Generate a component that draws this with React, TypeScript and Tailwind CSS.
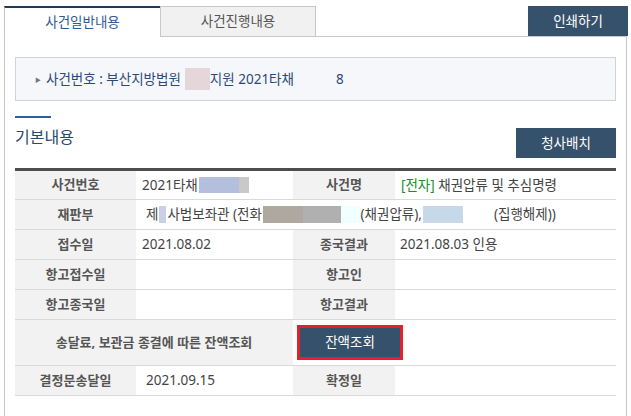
import React from 'react';

const font = { fontFamily: '"Noto Sans", "Noto Sans CJK KR", sans-serif' };

function Label({ children, colSpan }: { children?: React.ReactNode; colSpan?: number }) {
    return (
        <td colSpan={colSpan} className="bg-[#f2f2f2] text-center font-bold text-[#555] text-[13px] h-[30px] p-0">
            {children}
        </td>
    );
}

function Value({ children, colSpan, className = '' }: { children?: React.ReactNode; colSpan?: number; className?: string }) {
    return (
        <td colSpan={colSpan} className={`bg-white text-[#444] text-[13.5px] h-[30px] py-0 pr-0 pl-[6px] whitespace-nowrap ${className}`}>
            {children}
        </td>
    );
}

export default function App() {
    return (
        <div className="w-[631px] h-[416px] bg-white overflow-hidden pt-[6px] pl-[4px]" style={font}>
            <div className="w-[623px]">
                {/* tabs */}
                <div className="flex h-[31px]">
                    <div className="w-[156px] border-t-2 border-l border-t-[#1e3d5c] border-l-[#c4c4c4] flex items-center justify-center text-[13.5px] text-[#2f5d92]">
                        사건일반내용
                    </div>
                    <div className="w-[156px] bg-[#f1f1f1] border border-[#c8c8c8] flex items-center justify-center text-[13.5px] text-[#555]">
                        사건진행내용
                    </div>
                    <div className="flex-1 border-b border-[#c8c8c8] flex justify-end">
                        <button className="w-[100px] h-[30px] bg-[#36516b] text-white text-[13.5px] -mr-[1px]">인쇄하기</button>
                    </div>
                </div>

                <div className="border-l border-r border-[#c8c8c8] px-[10px] pt-[20px] h-[380px]">
                    {/* case number */}
                    <div className="h-[44px] bg-[#f6f7fb] border border-[#cfd3dc] flex items-center pl-[19px] text-[13.5px] text-[#2c4a78]">
                        <span className="text-[6px] text-[#777] mr-[5px] mt-[3px]">▶</span>
                        <span>사건번호 : 부산지방법원</span>
                        <span className="inline-block w-[25px] h-[22px] bg-[#e4d6d9] ml-[4px]"></span>
                        <span>지원 2021타채</span>
                        <span className="ml-[42px]">8</span>
                    </div>

                    {/* heading */}
                    <div className="flex justify-between mt-[15px]">
                        <div>
                            <div className="w-[36px] h-[2px] bg-[#2462a4]"></div>
                            <div className="text-[16px] leading-[20px] text-[#2b4a6b] mt-[9px]">기본내용</div>
                        </div>
                        <button className="w-[100px] h-[30px] bg-[#36516b] text-white text-[13.5px] mt-[12px]">청사배치</button>
                    </div>

                    {/* table */}
                    <table className="w-[601px] mt-[10px] border-collapse table-fixed border-t-[3px] border-t-[#4d4d4d]">
                        <colgroup>
                            <col className="w-[121px]" />
                            <col className="w-[157px]" />
                            <col className="w-[102px]" />
                            <col className="w-[221px]" />
                        </colgroup>
                        <tbody>
                            <tr className="border-b border-[#d9d9d9]">
                                <Label>사건번호</Label>
                                <Value>
                                    <span className="inline-flex items-center">
                                        2021타채
                                        <span className="inline-block w-[40px] h-[16px] bg-[#b4bedd] ml-[1px]"></span>
                                        <span className="inline-block w-[10px] h-[16px] bg-[#c9c9c9]"></span>
                                    </span>
                                </Value>
                                <Label>사건명</Label>
                                <Value>
                                    <span className="text-[#238a2e]">[전자]</span> 채권압류 및 추심명령
                                </Value>
                            </tr>
                            <tr className="border-b border-[#d9d9d9]">
                                <Label>재판부</Label>
                                <Value colSpan={3} className="!pl-[10px]">
                                    <span className="inline-flex items-center">
                                        제
                                        <span className="inline-block w-[7px] h-[17px] bg-[#c9d0e6] mx-[1px]"></span>
                                        사법보좌관 (전화:
                                        <span className="inline-block w-[40px] h-[17px] bg-[#aea8a0] -ml-[3px]"></span>
                                        <span className="inline-block w-[38px] h-[17px] bg-[#b0b0b0]"></span>
                                        <span className="inline-block w-[20px] h-[17px] bg-[#f0ffff]"></span>
                                        (채권압류),
                                        <span className="inline-block w-[40px] h-[17px] bg-[#c7d9e8] ml-[1px]"></span>
                                        <span className="ml-[31px]">(집행해제))</span>
                                    </span>
                                </Value>
                            </tr>
                            <tr className="border-b border-[#d9d9d9]">
                                <Label>접수일</Label>
                                <Value>2021.08.02</Value>
                                <Label>종국결과</Label>
                                <Value className="!pl-[5px]">2021.08.03 인용</Value>
                            </tr>
                            <tr className="border-b border-[#d9d9d9]">
                                <Label>항고접수일</Label>
                                <Value></Value>
                                <Label>항고인</Label>
                                <Value></Value>
                            </tr>
                            <tr className="border-b border-[#d9d9d9]">
                                <Label>항고종국일</Label>
                                <Value></Value>
                                <Label>항고결과</Label>
                                <Value></Value>
                            </tr>
                            <tr className="border-b border-[#d9d9d9]">
                                <td colSpan={2} className="bg-[#f2f2f2] text-center font-bold text-[#555] text-[13px] h-[46px] p-0">
                                    송달료, 보관금 종결에 따른 잔액조회
                                </td>
                                <td colSpan={2} className="bg-white h-[46px] py-0 pr-0 pl-[4px]">
                                    <div className="w-[106px] h-[35px] border-[3px] border-[#e3202b] bg-[#36516b] flex items-center justify-center text-white text-[13.5px]">
                                        잔액조회
                                    </div>
                                </td>
                            </tr>
                            <tr className="border-b border-[#d9d9d9]">
                                <Label>결정문송달일</Label>
                                <Value className="!pl-[10px]">2021.09.15</Value>
                                <Label>확정일</Label>
                                <Value></Value>
                            </tr>
                        </tbody>
                    </table>
                </div>
            </div>
        </div>
    );
}
